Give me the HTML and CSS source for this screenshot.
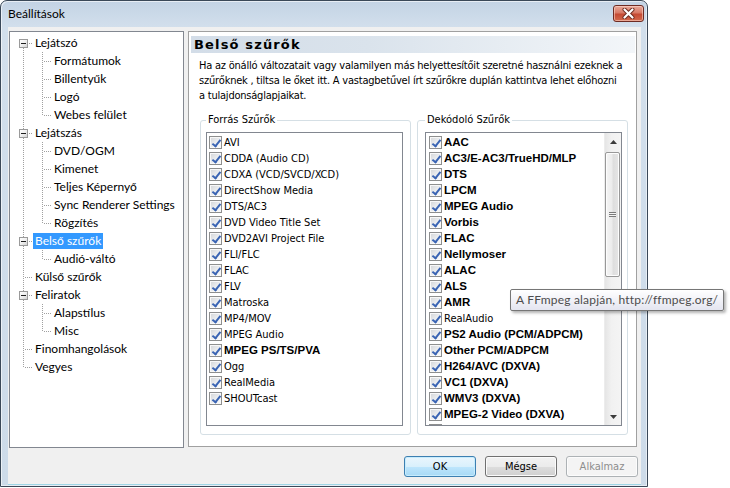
FILE: index.html
```html
<!DOCTYPE html>
<html lang="hu">
<head>
<meta charset="utf-8">
<title>Beállítások</title>
<link rel="stylesheet" href="styles.css">
</head>
<body>
<div class="screen">
  <div class="window">
    <div class="titlebar">
      <span class="title">Beállítások</span>
      <button class="close" aria-label="Bezárás">
        <svg width="13" height="11" viewBox="0 0 13 11">
          <path d="M2.5 1.5 L10.5 9.5 M10.5 1.5 L2.5 9.5" stroke="#6b2a1e" stroke-width="4" stroke-linecap="round"/>
          <path d="M2.5 1.5 L10.5 9.5 M10.5 1.5 L2.5 9.5" stroke="#ffffff" stroke-width="2.2" stroke-linecap="round"/>
        </svg>
      </button>
    </div>
    <div class="client">
      <div class="main">
        <div class="tree">
          <div class="row"><span class="c f"><i class="box"></i></span><span class="lbl">Lejátszó</span></div>
          <div class="row"><span class="c v"></span><span class="c t"></span><span class="lbl">Formátumok</span></div>
          <div class="row"><span class="c v"></span><span class="c t"></span><span class="lbl">Billentyűk</span></div>
          <div class="row"><span class="c v"></span><span class="c t"></span><span class="lbl">Logó</span></div>
          <div class="row"><span class="c v"></span><span class="c l"></span><span class="lbl">Webes felület</span></div>
          <div class="row"><span class="c t"><i class="box"></i></span><span class="lbl">Lejátszás</span></div>
          <div class="row"><span class="c v"></span><span class="c t"></span><span class="lbl">DVD/OGM</span></div>
          <div class="row"><span class="c v"></span><span class="c t"></span><span class="lbl">Kimenet</span></div>
          <div class="row"><span class="c v"></span><span class="c t"></span><span class="lbl">Teljes Képernyő</span></div>
          <div class="row"><span class="c v"></span><span class="c t"></span><span class="lbl">Sync Renderer Settings</span></div>
          <div class="row"><span class="c v"></span><span class="c l"></span><span class="lbl">Rögzítés</span></div>
          <div class="row"><span class="c t"><i class="box"></i></span><span class="lbl sel">Belső szűrők</span></div>
          <div class="row"><span class="c v"></span><span class="c l"></span><span class="lbl">Audió-váltó</span></div>
          <div class="row"><span class="c t"></span><span class="lbl">Külső szűrők</span></div>
          <div class="row"><span class="c t"><i class="box"></i></span><span class="lbl">Feliratok</span></div>
          <div class="row"><span class="c v"></span><span class="c t"></span><span class="lbl">Alapstílus</span></div>
          <div class="row"><span class="c v"></span><span class="c l"></span><span class="lbl">Misc</span></div>
          <div class="row"><span class="c t"></span><span class="lbl">Finomhangolások</span></div>
          <div class="row"><span class="c l"></span><span class="lbl">Vegyes</span></div>
        </div>
        <div class="page">
          <div class="header">Belső szűrők</div>
          <p class="desc">Ha az önálló változatait vagy valamilyen más helyettesítőit szeretné használni ezeknek a<br>szűrőknek , tiltsa le őket itt. A vastagbetűvel írt szűrőkre duplán kattintva lehet előhozni<br>a tulajdonságlapjaikat.</p>
          <div class="groups">
            <fieldset class="group src">
              <legend>Forrás Szűrők</legend>
              <div class="listbox">
                <div class="items">
                  <div class="item"><span class="cb"></span>AVI</div>
                  <div class="item"><span class="cb"></span>CDDA (Audio CD)</div>
                  <div class="item"><span class="cb"></span>CDXA (VCD/SVCD/XCD)</div>
                  <div class="item"><span class="cb"></span>DirectShow Media</div>
                  <div class="item"><span class="cb"></span>DTS/AC3</div>
                  <div class="item"><span class="cb"></span>DVD Video Title Set</div>
                  <div class="item"><span class="cb"></span>DVD2AVI Project File</div>
                  <div class="item"><span class="cb"></span>FLI/FLC</div>
                  <div class="item"><span class="cb"></span>FLAC</div>
                  <div class="item"><span class="cb"></span>FLV</div>
                  <div class="item"><span class="cb"></span>Matroska</div>
                  <div class="item"><span class="cb"></span>MP4/MOV</div>
                  <div class="item"><span class="cb"></span>MPEG Audio</div>
                  <div class="item b"><span class="cb"></span>MPEG PS/TS/PVA</div>
                  <div class="item"><span class="cb"></span>Ogg</div>
                  <div class="item"><span class="cb"></span>RealMedia</div>
                  <div class="item"><span class="cb"></span>SHOUTcast</div>
                </div>
              </div>
            </fieldset>
            <fieldset class="group dec">
              <legend>Dekódoló Szűrők</legend>
              <div class="listbox scroll">
                <div class="items">
                  <div class="item b"><span class="cb"></span>AAC</div>
                  <div class="item b"><span class="cb"></span>AC3/E-AC3/TrueHD/MLP</div>
                  <div class="item b"><span class="cb"></span>DTS</div>
                  <div class="item b"><span class="cb"></span>LPCM</div>
                  <div class="item b"><span class="cb"></span>MPEG Audio</div>
                  <div class="item b"><span class="cb"></span>Vorbis</div>
                  <div class="item b"><span class="cb"></span>FLAC</div>
                  <div class="item b"><span class="cb"></span>Nellymoser</div>
                  <div class="item b"><span class="cb"></span>ALAC</div>
                  <div class="item b"><span class="cb"></span>ALS</div>
                  <div class="item b"><span class="cb"></span>AMR</div>
                  <div class="item"><span class="cb"></span>RealAudio</div>
                  <div class="item b"><span class="cb"></span>PS2 Audio (PCM/ADPCM)</div>
                  <div class="item b"><span class="cb"></span>Other PCM/ADPCM</div>
                  <div class="item b"><span class="cb"></span>H264/AVC (DXVA)</div>
                  <div class="item b"><span class="cb"></span>VC1 (DXVA)</div>
                  <div class="item b"><span class="cb"></span>WMV3 (DXVA)</div>
                  <div class="item b"><span class="cb"></span>MPEG-2 Video (DXVA)</div>
                  <div class="item b"><span class="cb"></span>H264/AVC (FFmpeg)</div>
                </div>
                <div class="sb">
                  <div class="sb-btn">
                    <svg width="7" height="4" viewBox="0 0 7 4"><path d="M0 4 L3.5 0 L7 4 Z" fill="#3c3c3c"/></svg>
                  </div>
                  <div class="sb-track"><div class="thumb"><i class="grip"></i></div></div>
                  <div class="sb-btn">
                    <svg width="7" height="4" viewBox="0 0 7 4"><path d="M0 0 L3.5 4 L7 0 Z" fill="#3c3c3c"/></svg>
                  </div>
                </div>
              </div>
            </fieldset>
          </div>
        </div>
      </div>
      <div class="buttons">
        <button class="btn default">OK</button>
        <button class="btn">Mégse</button>
        <button class="btn" disabled>Alkalmaz</button>
      </div>
    </div>
  </div>
  <div class="tooltip">A FFmpeg alapján, http://ffmpeg.org/</div>
</div>
</body>
</html>
```
FILE: styles.css
```css
* { box-sizing: border-box; }
html, body { margin: 0; padding: 0; background: #ffffff; }
body { font: 12px "Lato", "Noto Sans", sans-serif; color: #000; }

:root {
  --dv: repeating-linear-gradient(to bottom, #a0a0a0 0 1px, transparent 1px 2px);
  --dh: repeating-linear-gradient(to right, #a0a0a0 0 1px, transparent 1px 2px);
  --dlg: "DejaVu Sans Condensed", "DejaVu Sans", sans-serif;
}

.screen { position: relative; width: 730px; height: 488px; overflow: hidden; background: #fff; }

.window {
  width: 648px;
  height: 487px;
  border: 1px solid #3a4858;
  border-radius: 7px 7px 0 0;
  background: linear-gradient(to bottom, #c3d3e4 0, #d2dfec 26px, #cddbe9 100%);
  display: flex;
  flex-direction: column;
  box-shadow: inset 1px 1px 0 rgba(255,255,255,.6), inset -1px -1px 0 rgba(255,255,255,.5);
}

.titlebar {
  height: 26px;
  flex: none;
  display: flex;
  align-items: flex-start;
  justify-content: space-between;
  padding: 4px 3px 0 7px;
}
.title { font-size: 12px; line-height: 18px; color: #000; }
.close {
  width: 31px; height: 17px;
  padding: 0; margin: 0;
  border: 1px solid #6e2b23;
  border-radius: 3px;
  background: linear-gradient(to bottom, #e9a99a 0, #d87a66 45%, #c54a33 55%, #d36a4d 100%);
  box-shadow: inset 0 0 0 1px rgba(255,220,210,.55);
  display: flex; align-items: center; justify-content: center;
}

.client {
  flex: 1;
  margin: 0 6px 2px 7px;
  background: #f0f0f0;
  padding: 4px 3px 0 1px;
  display: flex;
  flex-direction: column;
  box-shadow: 0 1px 0 #9fd6e6;
}

.main { display: flex; gap: 4px; height: 417px; flex: none; }

/* tree */
.tree {
  width: 175px;
  height: 417px;
  border: 1px solid #828790;
  background: #fff;
  padding: 2px 0 0 4px;
}
.row { display: flex; align-items: center; height: 18px; }
.c {
  width: 19px; height: 18px; flex: none;
  display: flex; align-items: center;
  padding-left: 5px;
  background-repeat: no-repeat;
}
.c.v { background-image: var(--dv); background-position: 9px 0; background-size: 1px 18px; }
.c.t { background-image: var(--dh), var(--dv); background-position: 11px 9px, 9px 0; background-size: 8px 1px, 1px 18px; }
.c.l { background-image: var(--dh), var(--dv); background-position: 11px 9px, 9px 0; background-size: 8px 1px, 1px 9px; }
.c.f { background-image: var(--dh), var(--dv); background-position: 11px 9px, 9px 10px; background-size: 8px 1px, 1px 8px; }
.box {
  width: 9px; height: 9px;
  border: 1px solid #9a9a9a;
  background: linear-gradient(135deg, #ffffff 0, #f0f0f0 50%, #d4d4d4 100%);
  display: flex; align-items: center; justify-content: center;
}
.box::after { content: ""; width: 5px; height: 1px; background: #1e1e1e; }
.lbl { height: 16px; line-height: 16px; padding: 0 2px; white-space: nowrap; }
.lbl.sel { background: #3399ff; color: #fff; }

/* right page */
.page {
  width: 449px;
  height: 416px;
  border: 1px solid #a0a0a0;
  background: #fff;
  padding: 4px 1px 0 2px;
}
.header {
  height: 17px;
  background: linear-gradient(to right, #d3dde8 0, #dae3ec 40%, #f3f6f9 100%);
  font: bold 13px "DejaVu Sans", sans-serif;
  letter-spacing: 1.15px;
  line-height: 17px;
  padding-left: 3px;
}
.desc {
  margin: 5px 0 10px 8px;
  white-space: nowrap;
  font: 11px var(--dlg);
  font-stretch: condensed;
  letter-spacing: -0.22px;
  line-height: 15px;
}

.groups { display: flex; gap: 6px; margin-left: 9px; }
.group {
  width: 211px;
  margin: 0;
  min-width: 0;
  border: 1px solid #d5dfe5;
  border-radius: 3px;
  padding: 5px 7px 8px 5px;
}
.group.dec { padding: 5px 5px 8px 7px; }
.group legend {
  padding: 0 2px;
  font: 11px var(--dlg);
  font-stretch: condensed;
  line-height: 14px;
  color: #000;
}

.listbox {
  height: 294px;
  border: 1px solid #828790;
  background: #fff;
  display: flex;
  overflow: hidden;
}
.items { flex: 1; padding: 1px 0 0 2px; overflow: hidden; min-width: 0; }
.scroll .items { padding-left: 3px; }
.item {
  height: 16px;
  display: flex; align-items: center;
  white-space: nowrap;
  font: 11px var(--dlg);
  font-stretch: condensed;
}
.item.b { font: bold 11.5px "Liberation Sans", Arial, sans-serif; }

.cb {
  width: 13px; height: 13px; flex: none;
  margin-right: 2px;
  border: 1px solid #8e8f8f;
  background: linear-gradient(135deg, #d3d5d8 0, #eef0f2 60%, #fbfbfb 100%);
  box-shadow: inset 0 0 0 1px #f8f8f8;
  position: relative;
}
.cb::after {
  content: "";
  position: absolute;
  left: 4px; top: 1px;
  width: 3px; height: 7px;
  border: solid #3a64b3;
  border-width: 0 2px 2px 0;
  transform: rotate(38deg);
}

.sb {
  width: 17px; flex: none;
  display: flex; flex-direction: column;
  background: linear-gradient(to right, #e5e5e5 0, #f1f1f1 40%, #f4f4f4 100%);
  border-left: 1px solid #ececec;
}
.sb-btn { height: 17px; flex: none; display: flex; align-items: center; justify-content: center; }
.sb-track { flex: 1; padding-top: 2px; }
.thumb {
  height: 125px;
  margin: 0 1px 0 0;
  border: 1px solid #989898;
  border-radius: 2px;
  background: linear-gradient(to right, #f5f5f5 0, #ececec 45%, #dedede 55%, #e6e6e6 100%);
  box-shadow: inset 0 0 0 1px #fdfdfd;
  display: flex; align-items: center; justify-content: center;
}
.grip {
  width: 7px; height: 5px;
  background: repeating-linear-gradient(to bottom, #7a7a7a 0 1px, #f4f4f4 1px 2px);
}

/* buttons */
.buttons { display: flex; justify-content: flex-end; gap: 9px; margin-top: 8px; padding-right: 0; }
.btn {
  width: 72px; height: 21px;
  padding: 0; margin: 0;
  font: 11px var(--dlg);
  font-stretch: condensed;
  color: #000;
  border: 1px solid #707070;
  border-radius: 3px;
  background: linear-gradient(to bottom, #f2f2f2 0, #ebebeb 50%, #dddddd 51%, #cfcfcf 100%);
  box-shadow: inset 0 0 0 1px #fbfbfb;
}
.btn.default {
  border-color: #3c7fb1;
  background: linear-gradient(to bottom, #eaf6fd 0, #d9f0fc 50%, #bee6fd 51%, #a7d9f5 100%);
  box-shadow: inset 0 0 0 1px #c7ecfd;
}
.btn:disabled {
  color: #8d8d8d;
  border-color: #adb2b5;
  background: #f4f4f4;
  box-shadow: inset 0 0 0 1px #fcfcfc;
}

/* tooltip */
.tooltip {
  position: absolute;
  left: 510px; top: 289px;
  height: 22px;
  padding: 0 5px;
  line-height: 20px;
  letter-spacing: 0.2px;
  border: 1px solid #767676;
  border-radius: 2px;
  background: linear-gradient(to bottom, #ffffff 0, #e4e5f0 100%);
  color: #4c4c4c;
  box-shadow: 2px 2px 3px rgba(0,0,0,.3);
  white-space: nowrap;
}
```
